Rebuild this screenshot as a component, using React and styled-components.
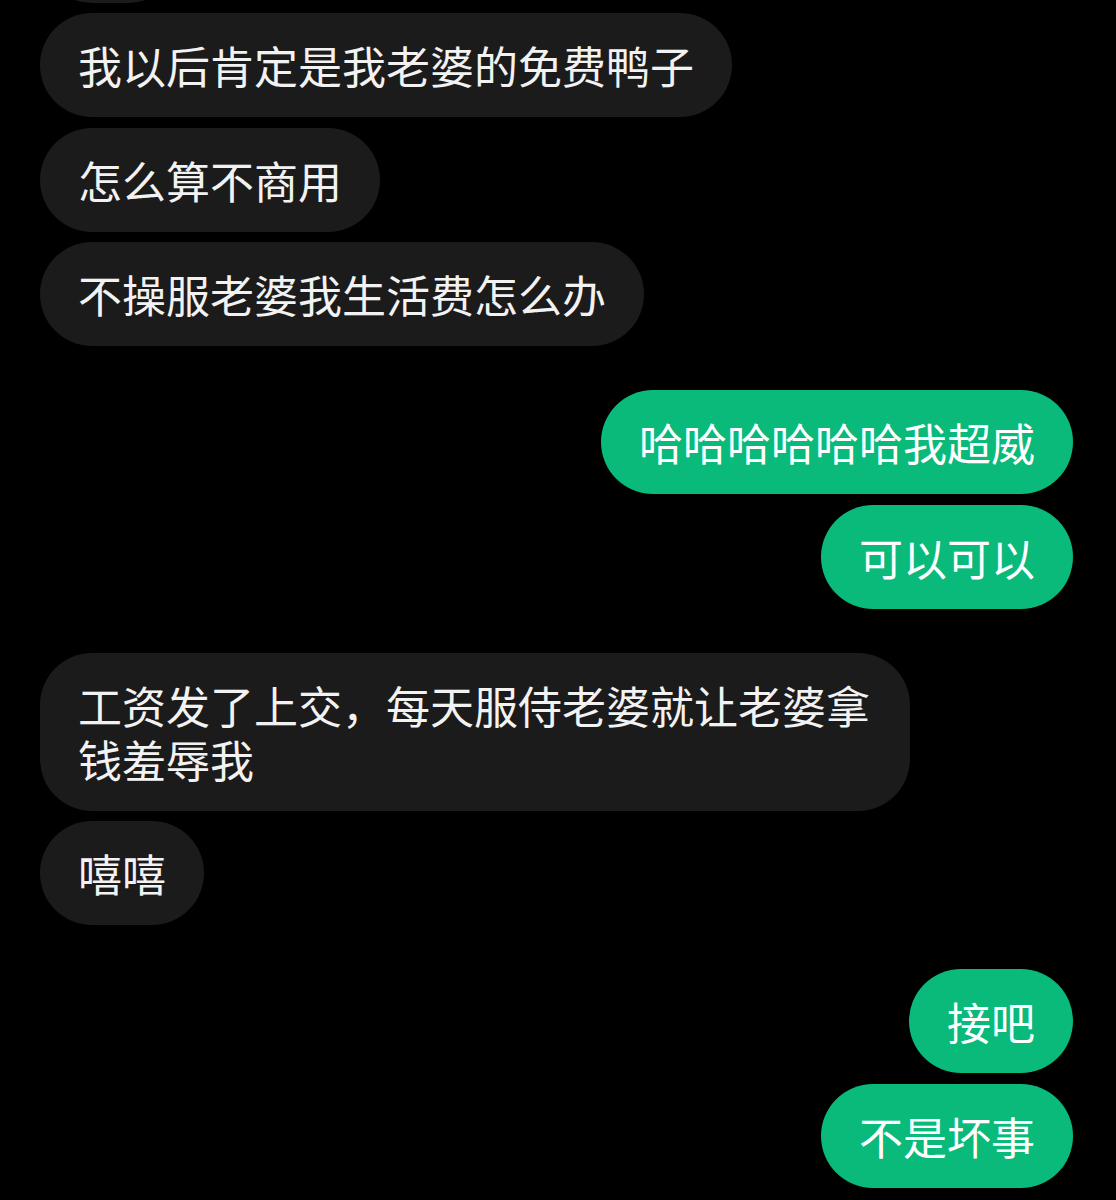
import React from 'react';
import styled, { createGlobalStyle } from 'styled-components';

const GlobalStyle = createGlobalStyle`
  html, body {
    margin: 0;
    padding: 0;
    background: #000;
  }
  body {
    font-family: "Noto Sans CJK SC", "Noto Sans", sans-serif;
  }
`;

// the first message of the thread is scrolled almost out of view,
// only the bottom rim of its bubble shows
const groups = [
  {
    mine: false,
    messages: [
      { text: '', peek: true },
      { text: '我以后肯定是我老婆的免费鸭子' },
      { text: '怎么算不商用' },
      { text: '不操服老婆我生活费怎么办' },
    ],
  },
  {
    mine: true,
    messages: [{ text: '哈哈哈哈哈哈我超威' }, { text: '可以可以' }],
  },
  {
    mine: false,
    messages: [
      { text: '工资发了上交，每天服侍老婆就让老婆拿钱羞辱我' },
      { text: '嘻嘻' },
    ],
  },
  {
    mine: true,
    messages: [{ text: '接吧' }, { text: '不是坏事' }],
  },
];

const App = () => {
  return (
    <>
      <GlobalStyle />
      <Viewport>
        <Thread>
          {groups.map((group, i) => (
            <Group key={i} $mine={group.mine}>
              {group.messages.map((msg, j) => (
                <Bubble key={j} $mine={group.mine} $peek={msg.peek}>
                  {msg.text}
                </Bubble>
              ))}
            </Group>
          ))}
        </Thread>
      </Viewport>
    </>
  );
};

const Viewport = styled.div`
  width: 1116px;
  height: 1200px;
  overflow: hidden;
  background: #000;
`;

const Thread = styled.div`
  display: flex;
  flex-direction: column;
  gap: 44px;
  padding: 0 43px 0 40px;
  margin-top: -101.5px;
`;

const Group = styled.div`
  display: flex;
  flex-direction: column;
  align-items: ${(p) => (p.$mine ? 'flex-end' : 'flex-start')};
  gap: 10.5px;
`;

const Bubble = styled.div`
  box-sizing: border-box;
  max-width: 870px;
  min-height: 104px;
  width: ${(p) => (p.$peek ? '140px' : 'auto')};
  padding: 25px 38px;
  border-radius: 52px;
  background: ${(p) => (p.$mine ? '#09ba7b' : '#1b1b1b')};
  color: ${(p) => (p.$mine ? '#ffffff' : '#f2f2f2')};
  font-size: 44px;
  line-height: 54px;
  font-weight: 400;
  word-break: break-all;
`;

export default App;
